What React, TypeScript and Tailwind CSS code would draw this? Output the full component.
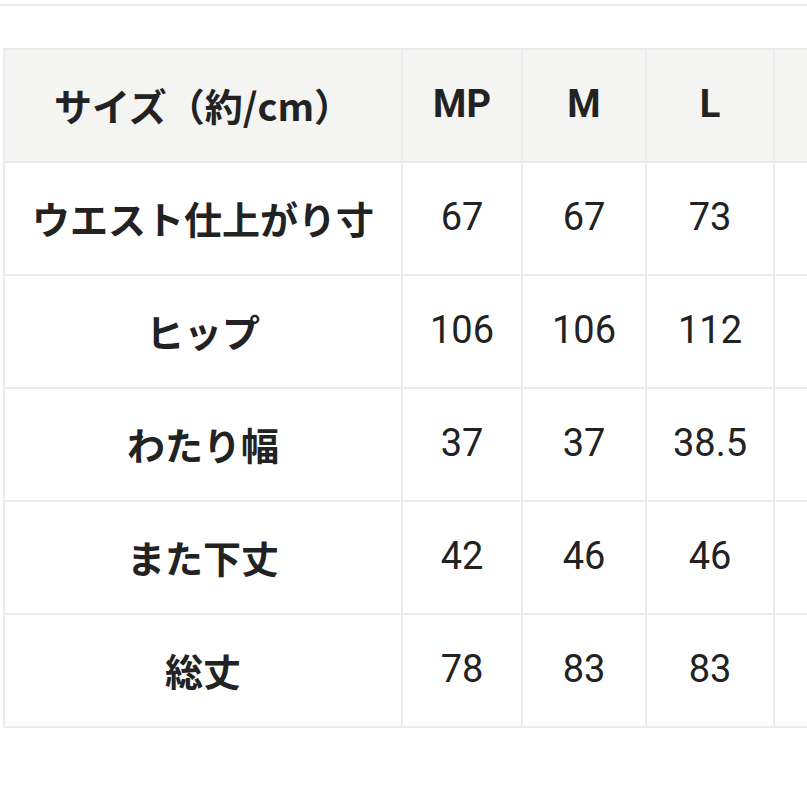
const sizes = ["MP", "M", "L", "LL"];

const rows = [
  { label: "ウエスト仕上がり寸", values: ["67", "67", "73", "79"] },
  { label: "ヒップ", values: ["106", "106", "112", "118"] },
  { label: "わたり幅", values: ["37", "37", "38.5", "40"] },
  { label: "また下丈", values: ["42", "46", "46", "46"] },
  { label: "総丈", values: ["78", "83", "83", "84"] },
];

const colWidths = ["w-[398px]", "w-[120px]", "w-[124px]", "w-[128px]", "w-[130px]"];

export default function App() {
  return (
    <div className="w-[807px] h-[807px] overflow-hidden bg-white text-[#222] font-['Roboto','Noto_Sans_CJK_JP',sans-serif]">
      <div className="h-[4px]" />
      <div className="h-[2px] bg-[#ececec]" />
      <div className="pt-[42px] pl-[3px]">
        <table className="table-fixed border-collapse w-[900px]">
          <colgroup>
            {colWidths.map((w, i) => (
              <col key={i} className={w} />
            ))}
          </colgroup>
          <thead>
            <tr className="h-[113px] bg-[#f4f4f3]">
              <th className="border-2 border-[#ebebeb] pb-[3px] text-[38px] font-bold font-['Noto_Sans_CJK_JP',sans-serif] text-center">
                サイズ（約/cm）
              </th>
              {sizes.map((s) => (
                <th key={s} className="border-2 border-[#ebebeb] pb-[3px] text-[38px] font-bold text-center">
                  {s}
                </th>
              ))}
            </tr>
          </thead>
          <tbody>
            {rows.map((r) => (
              <tr key={r.label} className="h-[113px]">
                <td className="border-2 border-[#ebebeb] pb-[3px] text-[38px] font-bold font-['Noto_Sans_CJK_JP',sans-serif] text-center whitespace-nowrap">
                  {r.label}
                </td>
                {r.values.map((v, i) => (
                  <td key={i} className="border-2 border-[#ebebeb] pb-[3px] text-[38px] text-center">
                    {v}
                  </td>
                ))}
              </tr>
            ))}
          </tbody>
        </table>
      </div>
    </div>
  );
}
